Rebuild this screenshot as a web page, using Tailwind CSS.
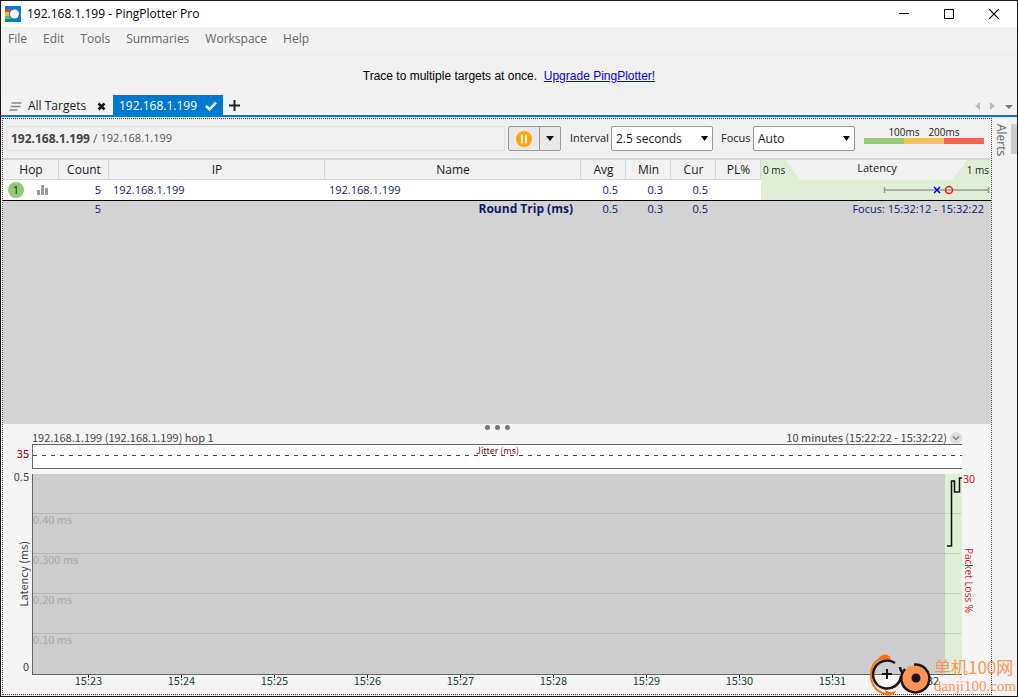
<!DOCTYPE html>
<html lang="en">
<head>
<meta charset="utf-8">
<title>192.168.1.199 - PingPlotter Pro</title>
<script src="https://cdn.jsdelivr.net/npm/@tailwindcss/browser@4"></script>
</head>
<body class="font-['Open_Sans','Noto_Sans_CJK_SC',sans-serif] text-xs text-[#1a1a1a]">
<div class="relative flex min-h-screen flex-col border border-[#1a1718] bg-[#f0f0f0]">

  <header class="flex h-[26px] shrink-0 items-center bg-white pl-1 text-black">
    <svg class="size-4" viewBox="0 0 16 16" aria-hidden="true">
      <rect width="16" height="16" fill="#0b7ad8"/>
      <rect y="3" width="6" height="3" fill="#e8452c"/>
      <rect y="6" width="5" height="4" fill="#f6b53c"/>
      <rect y="10" width="6" height="3" fill="#5cb85c"/>
      <circle cx="9.500" cy="8" r="5.500" fill="#0b7ad8"/>
      <circle cx="9.500" cy="8" r="4.500" fill="#fff"/>
    </svg>
    <h1 class="ml-1.5 flex-1 text-xs">192.168.1.199 - PingPlotter Pro</h1>
    <button aria-label="Minimize" class="flex h-full w-[45px] items-center justify-center"><svg width="10" height="10" viewBox="0 0 10 10"><path d="M0 4.500h10" stroke="#000"/></svg></button>
    <button aria-label="Maximize" class="flex h-full w-[45px] items-center justify-center"><svg width="10" height="10" viewBox="0 0 10 10"><path d="M.5.5h9v9h-9z" fill="none" stroke="#000"/></svg></button>
    <button aria-label="Close" class="flex h-full w-[46px] items-center justify-center"><svg width="10" height="10" viewBox="0 0 10 10"><path d="M0 0l10 10M10 0L0 10" stroke="#000" stroke-width="1.200"/></svg></button>
  </header>

  <nav class="flex h-[23px] shrink-0 items-center gap-4 bg-[#f2f2f2] pl-[7px] text-xs text-[#666]">
    <button>File</button><button>Edit</button><button>Tools</button><button>Summaries</button><button>Workspace</button><button>Help</button>
  </nav>

  <div class="flex h-[45px] shrink-0 items-center justify-center pt-1.5 font-['Liberation_Sans',sans-serif] text-xs text-black">
    <p>Trace to multiple targets at once.&nbsp; <a href="#" class="text-[#0000ee] underline">Upgrade PingPlotter!</a></p>
  </div>

  <div class="flex h-[22px] shrink-0 items-stretch border-b-2 border-[#0078d0] bg-[#f2f2f2] text-xs">
    <button class="flex w-28 items-center pt-0.5 pl-2">
      <svg class="mr-1.5" width="13" height="9" viewBox="0 0 13 9"><path d="M2.500 1h10M1.500 4.500h10M.5 8h8" stroke="#888" stroke-width="1.500"/></svg>
      <span class="flex-1 text-left">All Targets</span>
      <svg class="mr-[7px]" width="9" height="9" viewBox="0 0 9 9"><path d="M1.500 1.500l6 6M7.500 1.500l-6 6" stroke="#1a1a1a" stroke-width="2.600"/></svg>
    </button>
    <button class="flex w-[110px] items-center bg-[#0078d0] pt-0.5 pl-1.5 text-white">
      <span class="flex-1 text-left">192.168.1.199</span>
      <svg class="mr-1.5" width="12" height="10" viewBox="0 0 12 10"><path d="M1 5l3.500 3.300L11 1.500" fill="none" stroke="#fff" stroke-width="2.500"/></svg>
    </button>
    <button aria-label="New tab" class="flex w-[23px] items-center justify-center"><svg width="11" height="11" viewBox="0 0 11 11"><path d="M5.500 0v11M0 5.500h11" stroke="#222" stroke-width="2"/></svg></button>
    <div class="flex flex-1 items-center justify-end gap-2.5 pt-0.5 pr-1">
      <button aria-label="Scroll left"><svg width="5" height="8" viewBox="0 0 5 8"><path d="M5 0v8L0 4z" fill="#bbb"/></svg></button>
      <button aria-label="Scroll right"><svg width="5" height="8" viewBox="0 0 5 8"><path d="M0 0v8l5-4z" fill="#bbb"/></svg></button>
      <button aria-label="Tab list" class="pt-0.5"><svg width="8" height="4" viewBox="0 0 8 4"><path d="M0 0h8L4 4z" fill="#777"/></svg></button>
    </div>
  </div>

  <div class="flex flex-1 pt-px pb-px pl-px">
    <main class="flex min-w-0 flex-1 flex-col border border-dotted border-[#444]">

      <div class="flex h-[41px] shrink-0 items-center border-b-2 border-[#d3d3d3] pr-[7px] pl-[3px]">
        <div class="flex h-[25px] min-w-0 flex-1 items-center border border-[#e2e2e2] pl-1 text-[#555]"><b class="font-bold text-[#444]">192.168.1.199</b>&nbsp;/&nbsp;<span class="text-[11px]">192.168.1.199</span></div>
        <div class="ml-[3px] flex h-[25px] w-[53px] rounded-xs border border-[#999] bg-[#e9e9e9]">
          <button aria-label="Pause" class="flex flex-1 items-center justify-center border-r border-[#999]">
            <svg width="16" height="16" viewBox="0 0 16 16"><circle cx="8" cy="8" r="8" fill="#ffa50a"/><path d="M6 3.500v9M10 3.500v9" stroke="#f2f2f2" stroke-width="2"/></svg>
          </button>
          <button aria-label="Trace options" class="flex w-5 items-center justify-center"><svg width="8" height="5" viewBox="0 0 8 5"><path d="M0 0h8L4 5z" fill="#111"/></svg></button>
        </div>
        <label for="interval" class="ml-[9px] w-[41px] text-[11px]">Interval</label>
        <div class="relative">
          <select id="interval" class="h-[25px] w-[102px] appearance-none rounded-xs border border-[#999] bg-white pl-1 text-xs"><option>2.5 seconds</option><option>5 seconds</option></select>
          <svg class="pointer-events-none absolute top-2.5 right-[5px]" width="7" height="5" viewBox="0 0 7 5"><path d="M0 0h7L3.500 5z" fill="#000"/></svg>
        </div>
        <label for="focus" class="ml-2 w-8 text-[11px]">Focus</label>
        <div class="relative">
          <select id="focus" class="h-[25px] w-[102px] appearance-none rounded-xs border border-[#999] bg-white pl-1 text-xs"><option>Auto</option><option>10 minutes</option></select>
          <svg class="pointer-events-none absolute top-2.5 right-[5px]" width="7" height="5" viewBox="0 0 7 5"><path d="M0 0h7L3.500 5z" fill="#000"/></svg>
        </div>
        <div class="mb-2 ml-[9px] w-[120px] text-[10px] leading-3">
          <div class="flex justify-center text-center"><span class="w-10">100ms</span><span class="w-10">200ms</span></div>
          <div class="flex h-1.5"><i class="flex-1 bg-[#93cb70]"></i><i class="flex-1 bg-[#ffbf4f]"></i><i class="flex-1 bg-[#fd634f]"></i></div>
        </div>
      </div>

      <div class="flex-1 bg-[#d3d3d3]">
        <table class="w-full table-fixed border-collapse text-[11px] leading-4 text-[#0d1a6b]">
          <colgroup><col class="w-14"><col class="w-[50px]"><col class="w-[216px]"><col><col class="w-[45px]"><col class="w-[45px]"><col class="w-[45px]"><col class="w-[45px]"><col class="w-[230px]"></colgroup>
          <thead class="bg-[#f1f1f1] text-[#1a1a1a]">
            <tr class="h-5">
              <th class="p-0 text-xs font-normal shadow-[inset_-1px_-1px_#d6d6d6]">Hop</th>
              <th class="p-0 text-xs font-normal shadow-[inset_-1px_-1px_#d6d6d6]">Count</th>
              <th class="p-0 text-xs font-normal shadow-[inset_-1px_-1px_#d6d6d6]">IP</th>
              <th class="p-0 text-xs font-normal shadow-[inset_-1px_-1px_#d6d6d6]">Name</th>
              <th class="p-0 text-xs font-normal shadow-[inset_-1px_-1px_#d6d6d6]">Avg</th>
              <th class="p-0 text-xs font-normal shadow-[inset_-1px_-1px_#d6d6d6]">Min</th>
              <th class="p-0 text-xs font-normal shadow-[inset_-1px_-1px_#d6d6d6]">Cur</th>
              <th class="p-0 text-xs font-normal shadow-[inset_-1px_-1px_#d6d6d6]">PL%</th>
              <th class="relative p-0 font-normal">
                <svg class="absolute inset-0" width="230" height="20" viewBox="0 0 230 20"><path d="M0 0h25l14 20H0zM206 0h24v20h-39z" fill="#dfefd6"/></svg>
                <div class="relative flex h-5 items-center justify-between pl-0.5"><span class="w-10 text-left text-[10px]">0 ms</span><span class="pb-1 text-[11px]">Latency</span><span class="w-10 pr-0.5 text-right text-[10px]">1 ms</span></div>
              </th>
            </tr>
          </thead>
          <tbody>
            <tr class="h-5 bg-white">
              <td class="p-0"><div class="flex items-center pl-[5px]"><span class="flex size-4 items-center justify-center rounded-full bg-[#93cb70]">1</span>
                <svg class="ml-[13px]" width="11" height="10" viewBox="0 0 11 10"><path d="M0 5h3v5H0zM4 0h3v10H4zM8 3h3v7H8z" fill="#999"/></svg></div></td>
              <td class="p-0 pr-2 text-right">5</td>
              <td class="p-0 pl-1">192.168.1.199</td>
              <td class="p-0 pl-1">192.168.1.199</td>
              <td class="p-0 pr-2 text-right">0.5</td>
              <td class="p-0 pr-2 text-right">0.3</td>
              <td class="p-0 pr-2 text-right">0.5</td>
              <td class="p-0"></td>
              <td class="bg-[#dfefd6] p-0">
                <svg class="block" width="230" height="20" viewBox="0 0 230 20"><path d="M123.500 10h104M123.500 7v6M227.500 7v6" stroke="#999" stroke-width="1.500"/><path d="M173 7l6 6M179 7l-6 6" stroke="#0000e0" stroke-width="1.500"/><circle cx="188" cy="10" r="3.500" fill="none" stroke="#e82020" stroke-width="1.500"/></svg>
              </td>
            </tr>
            <tr class="h-[18px] border-t border-black align-top">
              <td class="p-0"></td>
              <td class="p-0 pr-2 text-right">5</td>
              <td class="p-0"></td>
              <td class="p-0 pr-2 text-right text-xs font-bold">Round Trip (ms)</td>
              <td class="p-0 pr-2 text-right">0.5</td>
              <td class="p-0 pr-2 text-right">0.3</td>
              <td class="p-0 pr-2 text-right">0.5</td>
              <td class="p-0"></td>
              <td class="p-0 pr-[7px] text-right">Focus: 15:32:12 - 15:32:22</td>
            </tr>
          </tbody>
        </table>
      </div>

      <section class="shrink-0 bg-[#f5f5f5] font-['Noto_Sans_CJK_SC',sans-serif] text-[11px] text-[#444]">
        <div class="flex h-[7px] items-center justify-center gap-[5px]"><i class="size-[5px] rounded-full bg-[#777]"></i><i class="size-[5px] rounded-full bg-[#777]"></i><i class="size-[5px] rounded-full bg-[#777]"></i></div>
        <div class="mx-[29px] flex h-[13px] items-center leading-3">
          <h2 class="flex-1 pb-0.5">192.168.1.199 (192.168.1.199) hop 1</h2>
          <span class="pb-0.5">10 minutes (15:22:22 - 15:32:22)</span>
          <button aria-label="Change time range" class="ml-[3px]"><svg width="12" height="12" viewBox="0 0 12 12"><circle cx="6" cy="6" r="6" fill="#dcdcdc"/><path d="M3 4.500l3 3 3-3" fill="none" stroke="#888" stroke-width="1.500"/></svg></button>
        </div>

        <div class="flex h-[25px]">
          <span class="w-[29px] pt-[3px] pr-[3px] text-right leading-3 text-[#8b0000]">35</span>
          <div class="relative flex-1 border-y border-l border-[#666] bg-[#fdfdfd] text-center text-[9px] leading-3 text-[#8b0000]">Jitter (ms)
            <svg class="absolute top-2.5 left-0 h-px w-full"><line x1="0" y1="0.500" x2="100%" y2="0.500" stroke="#444" stroke-dasharray="4 5"/></svg>
          </div>
          <span class="w-[29px]"></span>
        </div>

        <div class="mt-[5px] flex h-[201px]">
          <div class="-mt-1 flex w-[29px] flex-col items-end justify-between pr-[3px] pb-[3px] leading-3">
            <span>0.5</span>
            <span class="rotate-180 pb-1.5 whitespace-nowrap [writing-mode:vertical-rl]">Latency (ms)</span>
            <span>0</span>
          </div>
          <div class="relative flex-1 border-b border-l border-[#666] bg-[#cdcdcd]">
            <div class="absolute inset-y-0 right-0 w-[17px] bg-[#dfefd6]">
              <svg class="block" width="17" height="80" viewBox="0 0 17 80"><path d="M2 72h4.500V7H9.500v11h5V4H17" fill="none" stroke="#111" stroke-width="1.500"/></svg>
            </div>
            <div class="relative leading-[10px] text-[#aaa]">
              <div class="h-10 border-b border-black/10"></div>
              <div class="h-10 border-b border-black/10">0.40 ms</div>
              <div class="h-10 border-b border-black/10">0.300 ms</div>
              <div class="h-10 border-b border-black/10">0.20 ms</div>
              <div class="h-10">0.10 ms</div>
            </div>
          </div>
          <div class="w-[29px] text-[#c8102e]">
            <div class="-mt-0.5 pl-px leading-3">30</div>
            <div class="mt-16 font-['Open_Sans',sans-serif] text-[10px] whitespace-nowrap leading-[14px] [writing-mode:vertical-rl]">Packet Loss %</div>
          </div>
        </div>

        <div class="mr-[19px] ml-[39px] flex h-[19px] leading-2 text-[#1b4332]">
          <span class="flex flex-1 flex-col items-center"><i class="-mt-px h-1 w-px bg-[#222]"></i><span class="-mt-0.5">15:23</span></span>
          <span class="flex flex-1 flex-col items-center"><i class="-mt-px h-1 w-px bg-[#222]"></i><span class="-mt-0.5">15:24</span></span>
          <span class="flex flex-1 flex-col items-center"><i class="-mt-px h-1 w-px bg-[#222]"></i><span class="-mt-0.5">15:25</span></span>
          <span class="flex flex-1 flex-col items-center"><i class="-mt-px h-1 w-px bg-[#222]"></i><span class="-mt-0.5">15:26</span></span>
          <span class="flex flex-1 flex-col items-center"><i class="-mt-px h-1 w-px bg-[#222]"></i><span class="-mt-0.5">15:27</span></span>
          <span class="flex flex-1 flex-col items-center"><i class="-mt-px h-1 w-px bg-[#222]"></i><span class="-mt-0.5">15:28</span></span>
          <span class="flex flex-1 flex-col items-center"><i class="-mt-px h-1 w-px bg-[#222]"></i><span class="-mt-0.5">15:29</span></span>
          <span class="flex flex-1 flex-col items-center"><i class="-mt-px h-1 w-px bg-[#222]"></i><span class="-mt-0.5">15:30</span></span>
          <span class="flex flex-1 flex-col items-center"><i class="-mt-px h-1 w-px bg-[#222]"></i><span class="-mt-0.5">15:31</span></span>
          <span class="flex flex-1 flex-col items-center"><i class="-mt-px h-1 w-px bg-[#222]"></i><span class="-mt-0.5">15:32</span></span>
        </div>
      </section>
    </main>

    <aside class="flex w-[25px] shrink-0 items-start justify-between bg-[#f2f2f2] pt-1.5 pl-[3px]">
      <button class="text-xs leading-3 text-[#666] [writing-mode:vertical-rl]">Alerts</button>
      <i class="h-[30px] w-1.5 bg-[#cdcdcd]"></i>
    </aside>
  </div>

  <div class="absolute right-px bottom-0 flex items-end text-[#ff9455]">
    <svg width="64" height="42" viewBox="0 0 64 42">
      <path d="M16 4C7 3 1 11 1 21c0 10 6 18 16 19" fill="none" stroke="#ff7010" stroke-width="2"/>
      <path d="M8 5c3-5 9-6 12-2l1 3c-4-2-9-1-13 1zM15 36c5 3 8 2 11 1-2 5-8 5-10 4z" fill="#ff7010"/>
      <path d="M25 9A14 14 0 1 0 31 22" fill="none" stroke="#1c1414" stroke-width="2.500"/>
      <path d="M12 20h10M17 15v10" stroke="#1c1414" stroke-width="2"/>
      <circle cx="46" cy="25" r="14" fill="#ff9455"/>
      <path d="M44 10.500A14 14 0 1 1 35 15M30 13c0 3 2 5 3 7" fill="none" stroke="#1c1414" stroke-width="2.500"/>
      <circle cx="46" cy="24" r="4.500" fill="#1c1414"/>
    </svg>
    <div class="w-[82px] whitespace-nowrap">
      <div class="font-['Noto_Sans_CJK_SC',sans-serif] text-[17px] leading-[18px]">单机100网</div>
      <div class="font-['Liberation_Serif',serif] text-[15px] leading-[20px]">danji100.com</div>
    </div>
  </div>
</div>
</body>
</html>
